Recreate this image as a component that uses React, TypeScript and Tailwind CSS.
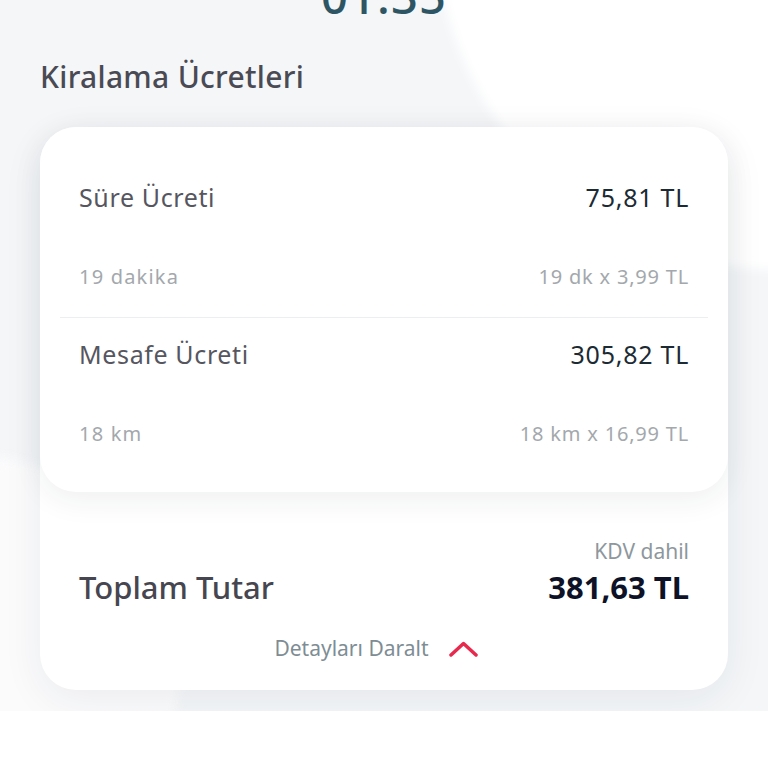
const font = { fontFamily: '"Noto Sans", "Open Sans", sans-serif' };

function FeeRow({ label, amount, detail, calc }: { label: string; amount: string; detail: string; calc: string }) {
  return (
    <div className="px-[39px]">
      <div className="flex h-10 items-center justify-between">
        <span className="text-[25px] tracking-[0.025em] text-[#56565f]">{label}</span>
        <span className="text-[25px] tracking-[0.03em] text-[#1b2a33]">{amount}</span>
      </div>
      <div className="mt-[39px] flex h-10 items-center justify-between">
        <span className="text-[20px] tracking-[0.06em] text-[#a3a8ad]">{detail}</span>
        <span className="text-[20px] tracking-[0.04em] text-[#a3a8ad]">{calc}</span>
      </div>
    </div>
  );
}

export default function App() {
  return (
    <div className="min-h-[768px] bg-white" style={font}>
      <section className="relative h-[711px] overflow-hidden bg-[#f4f6f8]">
        {/* soft background shapes */}
        <div className="pointer-events-none absolute left-[436px] top-[-420px] h-[690px] w-[820px] rounded-full bg-white blur-[6px]" />
        <div className="pointer-events-none absolute left-[-320px] top-[455px] h-[420px] w-[500px] rounded-full bg-[#fbfbfc] blur-[6px]" />

        <div className="relative">
          <div className="-mt-[34px] flex h-[60px] items-center justify-center">
            <span className="text-[47px] font-medium leading-none tracking-wide text-[#2d5564]">01:35</span>
          </div>

          <h2 className="mt-[30px] flex h-10 items-center px-10 text-[30px] font-medium tracking-[0.01em] text-[#4a4a54]">
            Kiralama Ücretleri
          </h2>

          <div className="mx-10 mt-[31px] rounded-[36px] bg-white shadow-[0_10px_40px_rgba(30,40,60,0.07)]">
            <div className="rounded-[36px] bg-white pb-[38px] pt-[51px] shadow-[0_8px_30px_rgba(30,40,60,0.07)]">
              <FeeRow label="Süre Ücreti" amount="75,81 TL" detail="19 dakika" calc="19 dk x 3,99 TL" />
              <div className="mx-5 mb-[17px] mt-5 h-px bg-[#eceef0]" />
              <FeeRow label="Mesafe Ücreti" amount="305,82 TL" detail="18 km" calc="18 km x 16,99 TL" />
            </div>

            <div className="px-[39px] pb-[28px] pt-[47px]">
              <div className="flex h-[26px] items-center justify-end">
                <span className="text-[21px] text-[#8d979d]">KDV dahil</span>
              </div>
              <div className="mt-1 flex h-9 items-center justify-between">
                <span className="text-[31px] font-medium text-[#464650]">Toplam Tutar</span>
                <span className="text-[31px] font-bold text-[#0d1226]">381,63 TL</span>
              </div>
              <button className="mx-auto mt-[31px] flex h-[26px] items-center gap-5 pr-4">
                <span className="text-[21px] text-[#7e8d94]">Detayları Daralt</span>
                <svg width="29" height="16" viewBox="0 0 29 16" fill="none">
                  <path d="M2 14L14.5 2.5L27 14" stroke="#e8294e" strokeWidth="3.5" strokeLinecap="round" strokeLinejoin="round" />
                </svg>
              </button>
            </div>
          </div>
        </div>
      </section>
    </div>
  );
}
